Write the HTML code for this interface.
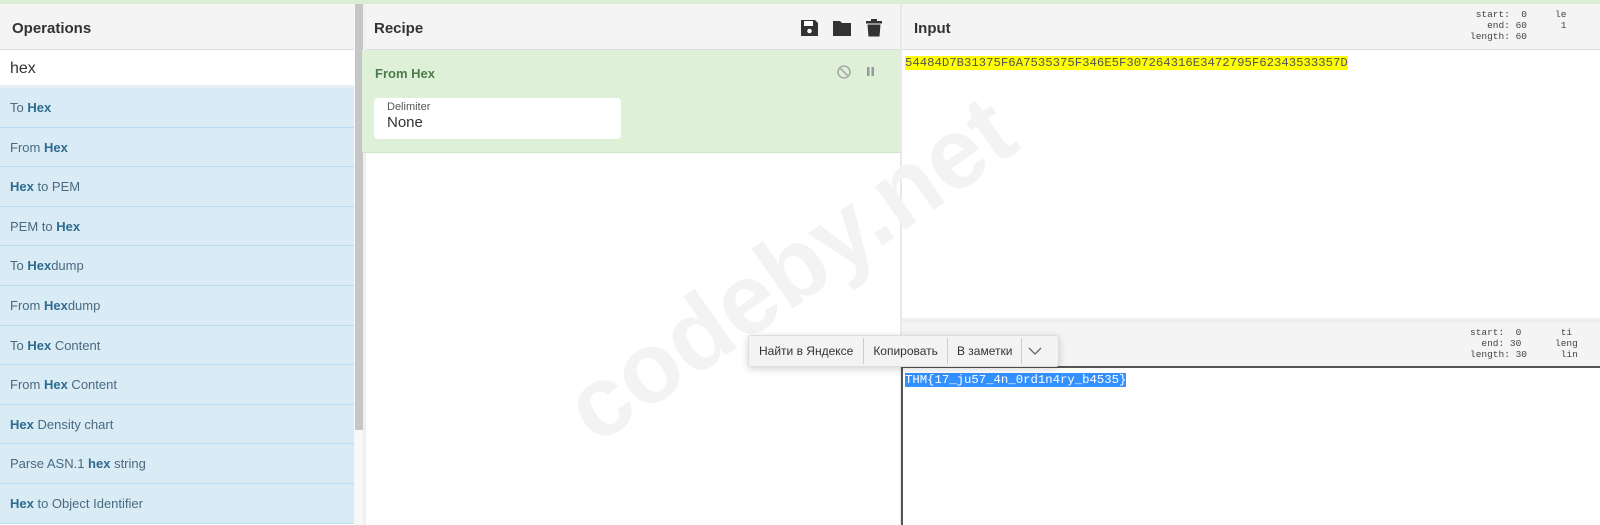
<!DOCTYPE html>
<html><head><meta charset="utf-8"><style>
*{box-sizing:border-box;margin:0;padding:0}
body{width:1600px;height:525px;overflow:hidden;background:#fff;font-family:"Liberation Sans","Noto Sans CJK SC",sans-serif;position:relative}
.abs{position:absolute}
.top{left:0;top:0;width:1600px;height:4px;background:#dcedd5}
.hdr{background:#f4f4f4;border-bottom:1px solid #ddd;height:46px;top:4px;font-weight:bold;font-size:15px;color:#333;padding:16px 12px 0}
.item{left:0;width:354px;height:39.6px;background:#d9ebf5;border-bottom:1px solid #b8dcef;font-size:13px;color:#4a6a80;padding:12px 10px 0}
.item b{color:#2f6b90}
.mono{font-family:"Liberation Mono",monospace}
</style></head><body>
<div class="abs top"></div>
<div class="abs hdr" style="left:0;width:354px">Operations</div>
<div class="abs" style="left:0;top:51px;width:354px;height:37px;background:#fff;font-size:16px;color:#333;padding:9px 10px">hex</div>
<div class="abs" style="left:0;top:85px;width:354px;height:3px;background:#e6eef3"></div>
<div class="abs item" style="top:88px">To <b>Hex</b></div>
<div class="abs item" style="top:127.6px">From <b>Hex</b></div>
<div class="abs item" style="top:167.2px"><b>Hex</b> to PEM</div>
<div class="abs item" style="top:206.8px">PEM to <b>Hex</b></div>
<div class="abs item" style="top:246.4px">To <b>Hex</b>dump</div>
<div class="abs item" style="top:286px">From <b>Hex</b>dump</div>
<div class="abs item" style="top:325.6px">To <b>Hex</b> Content</div>
<div class="abs item" style="top:365.2px">From <b>Hex</b> Content</div>
<div class="abs item" style="top:404.8px"><b>Hex</b> Density chart</div>
<div class="abs item" style="top:444.4px">Parse ASN.1 <b>hex</b> string</div>
<div class="abs item" style="top:484px"><b>Hex</b> to Object Identifier</div>
<div class="abs" style="left:354px;top:4px;width:9px;height:521px;background:#f8f8f8"></div>
<div class="abs" style="left:355px;top:4px;width:8px;height:426px;background:#c6c6c6"></div>
<div class="abs" style="left:363px;top:4px;width:3px;height:521px;background:#f0f0f0"></div>

<div class="abs hdr" style="left:366px;width:534px;padding-left:8px">Recipe</div>
<svg class="abs" style="left:800px;top:18px" width="84" height="20" viewBox="0 0 84 20">
<path d="M1 2h14l3 3v13H1z" fill="#333"/><rect x="4" y="3" width="9" height="5" fill="#fff"/><circle cx="9.5" cy="13" r="2.3" fill="#fff"/>
<path d="M33 3h7l2 2h9v13H33z" fill="#333"/>
<rect x="66" y="3" width="16" height="2.5" fill="#333"/><rect x="71" y="1" width="6" height="2" fill="#333"/><path d="M67.5 6.5h13l-1 12h-11z" fill="#333"/>
</svg>
<div class="abs" style="left:362px;top:50px;width:538px;height:103px;background:#dff0d8;border-bottom:1px solid #d0e4c8"></div>
<div class="abs" style="left:375px;top:66px;font-size:13px;font-weight:bold;color:#4d7c4a">From Hex</div>
<svg class="abs" style="left:836px;top:64px" width="44" height="16"><circle cx="8" cy="8" r="6" fill="none" stroke="#aaa" stroke-width="1.6"/><path d="M4 4l8 8" stroke="#aaa" stroke-width="1.6"/><rect x="31" y="3" width="2.5" height="9" fill="#999"/><rect x="35.5" y="3" width="2.5" height="9" fill="#999"/></svg>
<div class="abs" style="left:374px;top:98px;width:247px;height:41px;background:#fff;border-radius:4px;padding:3px 13px">
<div style="font-size:11px;color:#555">Delimiter</div><div style="font-size:15px;color:#333;margin-top:1px">None</div></div>

<div class="abs" style="left:900px;top:4px;width:2px;height:521px;background:#e8e8e8"></div>
<div class="abs hdr" style="left:902px;width:698px;font-size:15px">Input</div>
<div class="abs mono" style="left:1470px;top:9px;font-size:9.5px;line-height:11px;color:#444;text-align:right;white-space:pre">start:  0
  end: 60
length: 60</div>
<div class="abs mono" style="left:1555px;top:9px;font-size:9.5px;line-height:11px;color:#444;white-space:pre">le
 1</div>
<div class="abs mono" style="left:905px;top:56px;font-size:12.3px;line-height:14px;background:#ffff00;color:#555">54484D7B31375F6A7535375F346E5F307264316E3472795F62343533357D</div>
<div class="abs" style="left:902px;top:318px;width:698px;height:5px;background:#efefef"></div>
<div class="abs" style="left:902px;top:323px;width:698px;height:43px;background:#f4f4f4"></div>
<div class="abs mono" style="left:1470px;top:327px;font-size:9.5px;line-height:11px;color:#444;white-space:pre">start:  0
  end: 30
length: 30</div>
<div class="abs mono" style="left:1555px;top:327px;font-size:9.5px;line-height:11px;color:#444;white-space:pre"> ti
leng
 lin</div>
<div class="abs" style="left:902px;top:366px;width:698px;height:2px;background:#555"></div>
<div class="abs" style="left:901px;top:366px;width:2px;height:159px;background:#555"></div>
<div class="abs mono" style="left:905px;top:373px;font-size:12.3px;line-height:14px;background:#3390ff;color:#fff">THM{17_ju57_4n_0rd1n4ry_b4535}</div>

<div class="abs" style="left:530px;top:212px;font-size:100px;font-weight:bold;color:#f3f3f3;transform:rotate(-35deg);transform-origin:center;width:520px;text-align:center">codeby.net</div>

<div class="abs" style="left:748px;top:335px;width:311px;height:32px;background:#f3f3f3;border:1px solid #ddd;border-radius:3px;box-shadow:0 2px 8px rgba(0,0,0,.18);font-size:12px;color:#333;display:flex;align-items:center">
<span style="padding:0 10px;border-right:1px solid #ccc;line-height:26px">Найти в Яндексе</span>
<span style="padding:0 9px;border-right:1px solid #ccc;line-height:26px">Копировать</span>
<span style="padding:0 9px;border-right:1px solid #ccc;line-height:26px">В заметки</span>
<svg width="26" height="14"><path d="M7 4l6 6 6-6" fill="none" stroke="#555" stroke-width="1.2"/></svg>
</div>
</body></html>
